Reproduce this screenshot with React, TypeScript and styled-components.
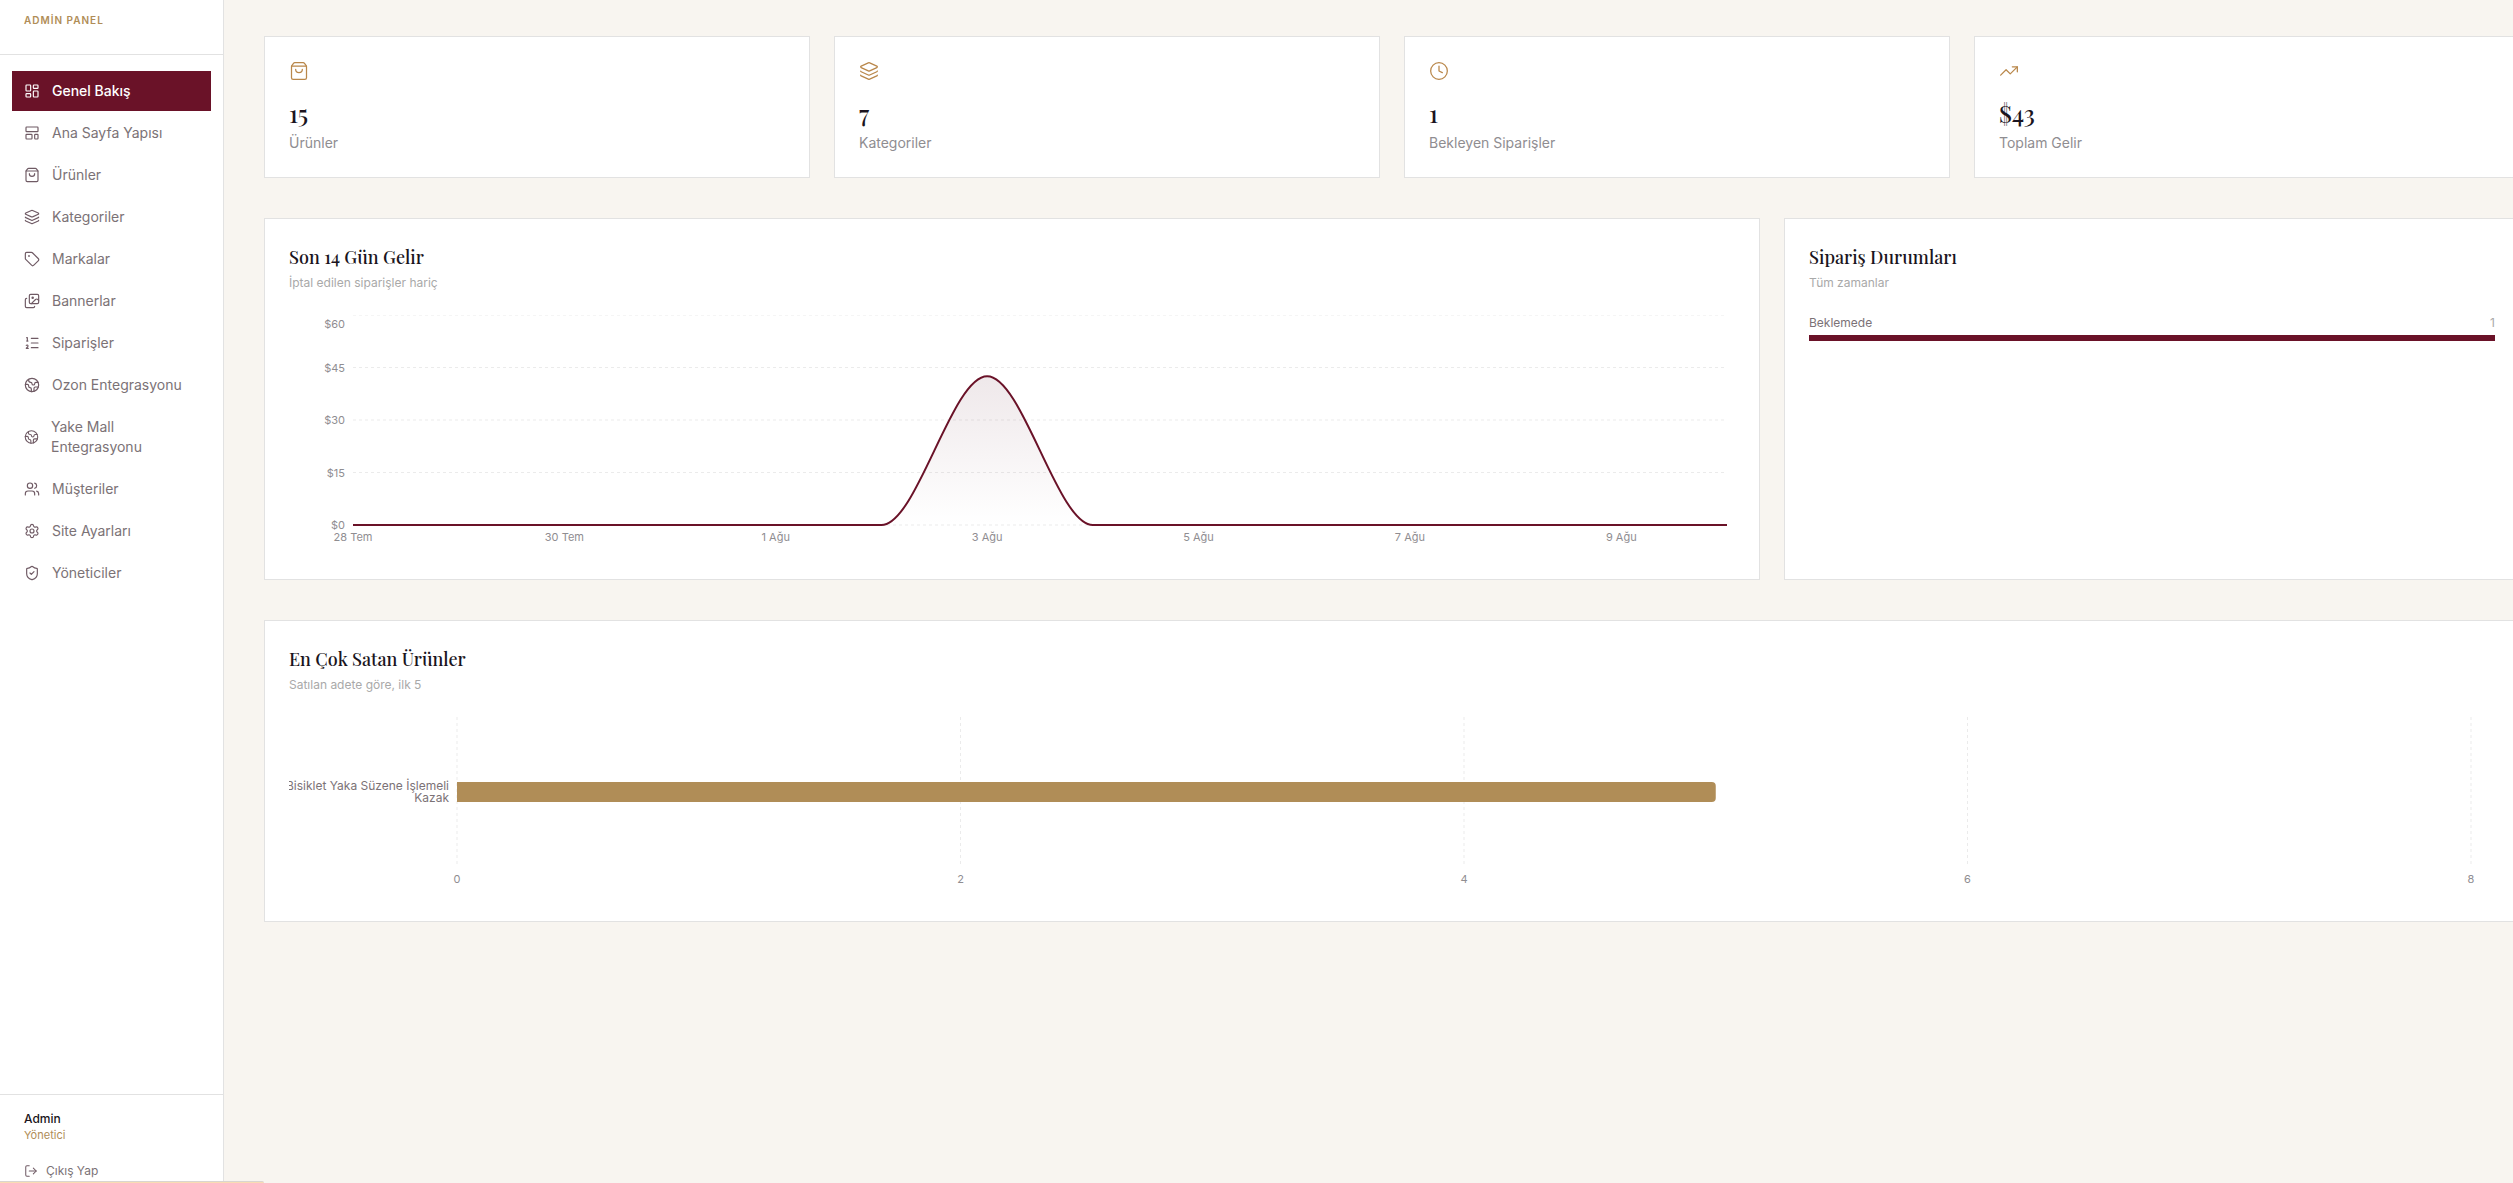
import React, { useLayoutEffect, useRef, useState } from 'react';
import styled, { createGlobalStyle } from 'styled-components';
import {
  LayoutDashboard, LayoutTemplate, ShoppingBag, Layers, Tag, Images, ListOrdered,
  Earth, Users, Settings, ShieldCheck, LogOut, Clock, TrendingUp, type LucideIcon,
} from 'lucide-react';

const color = {
  wine: '#6a1228',
  gold: '#b08d57',
  ink: '#1a1420',
  cream: '#f8f5f0',
  line: '#e2e2e2',
  grid: '#ebebeb',
  body: '#7b7276',
  icon: '#6f5a64',
  muted: '#8f8d91',
  faint: '#a9a9a9',
};

const sans = `Inter, 'Liberation Sans', sans-serif`;
const serif = `'Playfair Display', 'Liberation Serif', serif`;

const GlobalStyle = createGlobalStyle`
  *, *::before, *::after { box-sizing: border-box; }
  html, body, #root { height: 100%; }
  body {
    margin: 0;
    overflow: hidden;
    background: ${color.cream};
    color: ${color.ink};
    font-family: ${sans};
  }
  h2, p, ul, dl, dd { margin: 0; padding: 0; }
`;

const Shell = styled.div`
  display: grid;
  grid-template-columns: 224px minmax(0, 1fr);
  height: 100vh;
`;

const Sidebar = styled.aside`
  display: flex;
  flex-direction: column;
  min-height: 0;
  background: #fff;
  border-right: 1px solid ${color.line};
`;

const Brand = styled.div`
  padding: 13px 24px 26px;
  border-bottom: 1px solid ${color.line};
  color: ${color.gold};
  font-size: 10px;
  font-weight: 600;
  line-height: 15px;
  letter-spacing: 1px;
`;

const Nav = styled.nav`
  flex: 1;
  min-height: 0;
  padding: 16px 12px;
`;

const NavList = styled.ul`
  display: flex;
  flex-direction: column;
  gap: 2px;
  list-style: none;
`;

const NavLink = styled.a<{ $active?: boolean }>`
  display: flex;
  align-items: center;
  gap: 12px;
  padding: 10px 12px;
  background: ${(p) => (p.$active ? color.wine : 'transparent')};
  color: ${(p) => (p.$active ? '#fff' : color.body)};
  font-size: 14px;
  font-weight: ${(p) => (p.$active ? 500 : 400)};
  line-height: 20px;
  text-decoration: none;

  svg {
    color: ${(p) => (p.$active ? '#fff' : color.icon)};
  }
`;

const Account = styled.div`
  padding: 16px 24px 0;
  border-top: 1px solid ${color.line};
`;

const AccountName = styled.p`
  font-size: 12px;
  font-weight: 500;
  line-height: 16px;
`;

const AccountRole = styled.p`
  color: ${color.gold};
  font-size: 11px;
  line-height: 16px;
`;

const LogoutButton = styled.button`
  display: flex;
  align-items: center;
  gap: 8px;
  margin-top: 12px;
  padding: 8px 0 4px;
  border: 0;
  background: none;
  color: ${color.body};
  font-family: inherit;
  font-size: 12px;
  line-height: 16px;
`;

const StatusStrip = styled.div`
  position: fixed;
  left: 0;
  bottom: 0;
  width: 264px;
  height: 2px;
  border-top: 1px solid #d9d5d0;
  border-top-right-radius: 2px;
  background: #f9dcb4;
`;

const Main = styled.main`
  min-width: 0;
  padding: 36px 0 40px 40px;
  overflow: hidden;
`;

const Content = styled.div`
  display: flex;
  flex-direction: column;
  gap: 40px;
  margin-right: -7px;
`;

const StatGrid = styled.dl`
  display: grid;
  grid-template-columns: repeat(4, minmax(0, 1fr));
  gap: 24px;
`;

const ChartGrid = styled.div`
  display: grid;
  grid-template-columns: repeat(3, minmax(0, 1fr));
  gap: 24px;
`;

const Card = styled.section<{ $span?: number }>`
  grid-column: span ${(p) => p.$span ?? 1};
  min-width: 0;
  padding: 24px;
  border: 1px solid ${color.line};
  background: #fff;
`;

const StatCard = styled(Card).attrs({ as: 'div' })`
  display: flex;
  flex-direction: column;
  color: ${color.gold};
`;

const StatValue = styled.dd`
  order: 1;
  margin-top: 16px;
  color: ${color.ink};
  font-family: ${serif};
  font-size: 24px;
  font-weight: 500;
  line-height: 32px;
`;

const StatLabel = styled.dt`
  order: 2;
  margin-top: 4px;
  color: ${color.muted};
  font-size: 14px;
  line-height: 20px;
`;

const CardTitle = styled.h2`
  font-family: ${serif};
  font-size: 18px;
  font-weight: 500;
  line-height: 28px;
`;

const CardNote = styled.p`
  margin: 4px 0 24px;
  color: ${color.faint};
  font-size: 12px;
  line-height: 16px;
`;

const StatusRow = styled.div`
  display: flex;
  justify-content: space-between;
  margin-bottom: 4px;
  color: ${color.body};
  font-size: 12px;
  line-height: 16px;
`;

const StatusCount = styled.span`
  color: ${color.faint};
`;

const StatusTrack = styled.div`
  height: 6px;
  background: ${color.cream};
`;

const StatusFill = styled.div`
  height: 100%;
  background: ${color.wine};
`;

const ChartBox = styled.div<{ $height: number }>`
  height: ${(p) => p.$height}px;
`;

const ChartSvg = styled.svg`
  display: block;
  overflow: hidden;
  font-family: ${sans};
`;

const Tick = styled.text`
  fill: ${color.muted};
  font-size: 11px;
`;

const NameTick = styled.text`
  fill: ${color.body};
  font-size: 12px;
`;

function useWidth(initial: number) {
  const ref = useRef<HTMLDivElement>(null);
  const [width, setWidth] = useState(initial);
  useLayoutEffect(() => {
    const el = ref.current;
    if (!el) return;
    const measure = () => setWidth(el.clientWidth);
    measure();
    const observer = new ResizeObserver(measure);
    observer.observe(el);
    return () => observer.disconnect();
  }, []);
  return [ref, width] as const;
}

const revenue = [0, 0, 0, 0, 0, 0, 42.5, 0, 0, 0, 0, 0, 0, 0];
const dayLabels = ['28 Tem', '30 Tem', '1 Ağu', '3 Ağu', '5 Ağu', '7 Ağu', '9 Ağu'];

function RevenueChart() {
  const [ref, width] = useWidth(1446);
  const left = 64;
  const right = width - 8;
  const bottom = 210;
  const step = (right - left) / (revenue.length - 1);
  const x = (i: number) => left + i * step;
  const y = (v: number) => bottom - (v / 60) * bottom;
  const line = revenue
    .map((v, i) =>
      i === 0
        ? `M${x(0)},${y(v)}`
        : `C${x(i - 1) + step / 3},${y(revenue[i - 1])} ${x(i) - step / 3},${y(v)} ${x(i)},${y(v)}`,
    )
    .join('');
  return (
    <ChartBox ref={ref} $height={240}>
      <ChartSvg width={width} height={240} role="img" aria-label="Son 14 Gün Gelir">
        <defs>
          <linearGradient id="revenueFill" x1="0" y1="0" x2="0" y2="1">
            <stop offset="0" stopColor="#5b1a2e" stopOpacity="0.1" />
            <stop offset="1" stopColor="#5b1a2e" stopOpacity="0" />
          </linearGradient>
        </defs>
        {[0, 15, 30, 45, 60].map((v) => (
          <g key={v}>
            <line x1={left} x2={right} y1={y(v)} y2={y(v)} stroke={color.grid} strokeDasharray="3 3" />
            <Tick x={left - 8} y={Math.max(y(v), 9) + 4} textAnchor="end">${v}</Tick>
          </g>
        ))}
        <path d={`${line}L${right},${bottom}L${left},${bottom}Z`} fill="url(#revenueFill)" />
        <path d={line} fill="none" stroke={color.wine} strokeWidth="2" />
        {dayLabels.map((label, i) => (
          <Tick key={label} x={x(i * 2)} y={bottom + 16} textAnchor="middle">{label}</Tick>
        ))}
      </ChartSvg>
    </ChartBox>
  );
}

function ProductChart() {
  const [ref, width] = useWidth(2206);
  const left = 168;
  const right = width - 24;
  const bottom = 150;
  const x = (v: number) => left + (v / 8) * (right - left);
  return (
    <ChartBox ref={ref} $height={180}>
      <ChartSvg width={width} height={180} role="img" aria-label="En Çok Satan Ürünler">
        {[0, 2, 4, 6, 8].map((v) => (
          <g key={v}>
            <line x1={x(v)} x2={x(v)} y1={0} y2={bottom} stroke={color.grid} strokeDasharray="3 3" />
            <Tick x={x(v)} y={bottom + 16} textAnchor="middle">{v}</Tick>
          </g>
        ))}
        <path
          d={`M${left},65H${x(5) - 4}a4,4 0 0 1 4,4v12a4,4 0 0 1 -4,4H${left}Z`}
          fill={color.gold}
        />
        <NameTick textAnchor="end">
          <tspan x={left - 8} y={73}>Bisiklet Yaka Süzene İşlemeli</tspan>
          <tspan x={left - 8} y={85}>Kazak</tspan>
        </NameTick>
      </ChartSvg>
    </ChartBox>
  );
}

const navItems: { label: string; icon: LucideIcon; active?: boolean }[] = [
  { label: 'Genel Bakış', icon: LayoutDashboard, active: true },
  { label: 'Ana Sayfa Yapısı', icon: LayoutTemplate },
  { label: 'Ürünler', icon: ShoppingBag },
  { label: 'Kategoriler', icon: Layers },
  { label: 'Markalar', icon: Tag },
  { label: 'Bannerlar', icon: Images },
  { label: 'Siparişler', icon: ListOrdered },
  { label: 'Ozon Entegrasyonu', icon: Earth },
  { label: 'Yake Mall Entegrasyonu', icon: Earth },
  { label: 'Müşteriler', icon: Users },
  { label: 'Site Ayarları', icon: Settings },
  { label: 'Yöneticiler', icon: ShieldCheck },
];

const stats: { label: string; value: string; icon: LucideIcon }[] = [
  { label: 'Ürünler', value: '15', icon: ShoppingBag },
  { label: 'Kategoriler', value: '7', icon: Layers },
  { label: 'Bekleyen Siparişler', value: '1', icon: Clock },
  { label: 'Toplam Gelir', value: '$43', icon: TrendingUp },
];

const statuses = [{ label: 'Beklemede', count: 1 }];

export default function App() {
  const total = statuses.reduce((sum, s) => sum + s.count, 0);
  return (
    <>
      <GlobalStyle />
      <Shell>
        <Sidebar>
          <Brand>ADMİN PANEL</Brand>
          <Nav>
            <NavList>
              {navItems.map(({ label, icon: Icon, active }) => (
                <li key={label}>
                  <NavLink href="#" $active={active} aria-current={active ? 'page' : undefined}>
                    <Icon size={16} strokeWidth={1.75} />
                    <span>{label}</span>
                  </NavLink>
                </li>
              ))}
            </NavList>
          </Nav>
          <Account>
            <AccountName>Admin</AccountName>
            <AccountRole>Yönetici</AccountRole>
            <LogoutButton type="button">
              <LogOut size={14} strokeWidth={1.75} color={color.icon} />
              Çıkış Yap
            </LogoutButton>
          </Account>
        </Sidebar>
        <Main>
          <Content>
            <StatGrid>
              {stats.map(({ label, value, icon: Icon }) => (
                <StatCard key={label}>
                  <Icon size={20} strokeWidth={1.5} color="#b9874a" />
                  <StatLabel>{label}</StatLabel>
                  <StatValue>{value}</StatValue>
                </StatCard>
              ))}
            </StatGrid>
            <ChartGrid>
              <Card $span={2}>
                <CardTitle>Son 14 Gün Gelir</CardTitle>
                <CardNote>İptal edilen siparişler hariç</CardNote>
                <RevenueChart />
              </Card>
              <Card>
                <CardTitle>Sipariş Durumları</CardTitle>
                <CardNote>Tüm zamanlar</CardNote>
                {statuses.map((s) => (
                  <div key={s.label}>
                    <StatusRow>
                      <span>{s.label}</span>
                      <StatusCount>{s.count}</StatusCount>
                    </StatusRow>
                    <StatusTrack>
                      <StatusFill style={{ width: `${(s.count / total) * 100}%` }} />
                    </StatusTrack>
                  </div>
                ))}
              </Card>
            </ChartGrid>
            <Card>
              <CardTitle>En Çok Satan Ürünler</CardTitle>
              <CardNote>Satılan adete göre, ilk 5</CardNote>
              <ProductChart />
            </Card>
          </Content>
        </Main>
      </Shell>
      <StatusStrip />
    </>
  );
}
